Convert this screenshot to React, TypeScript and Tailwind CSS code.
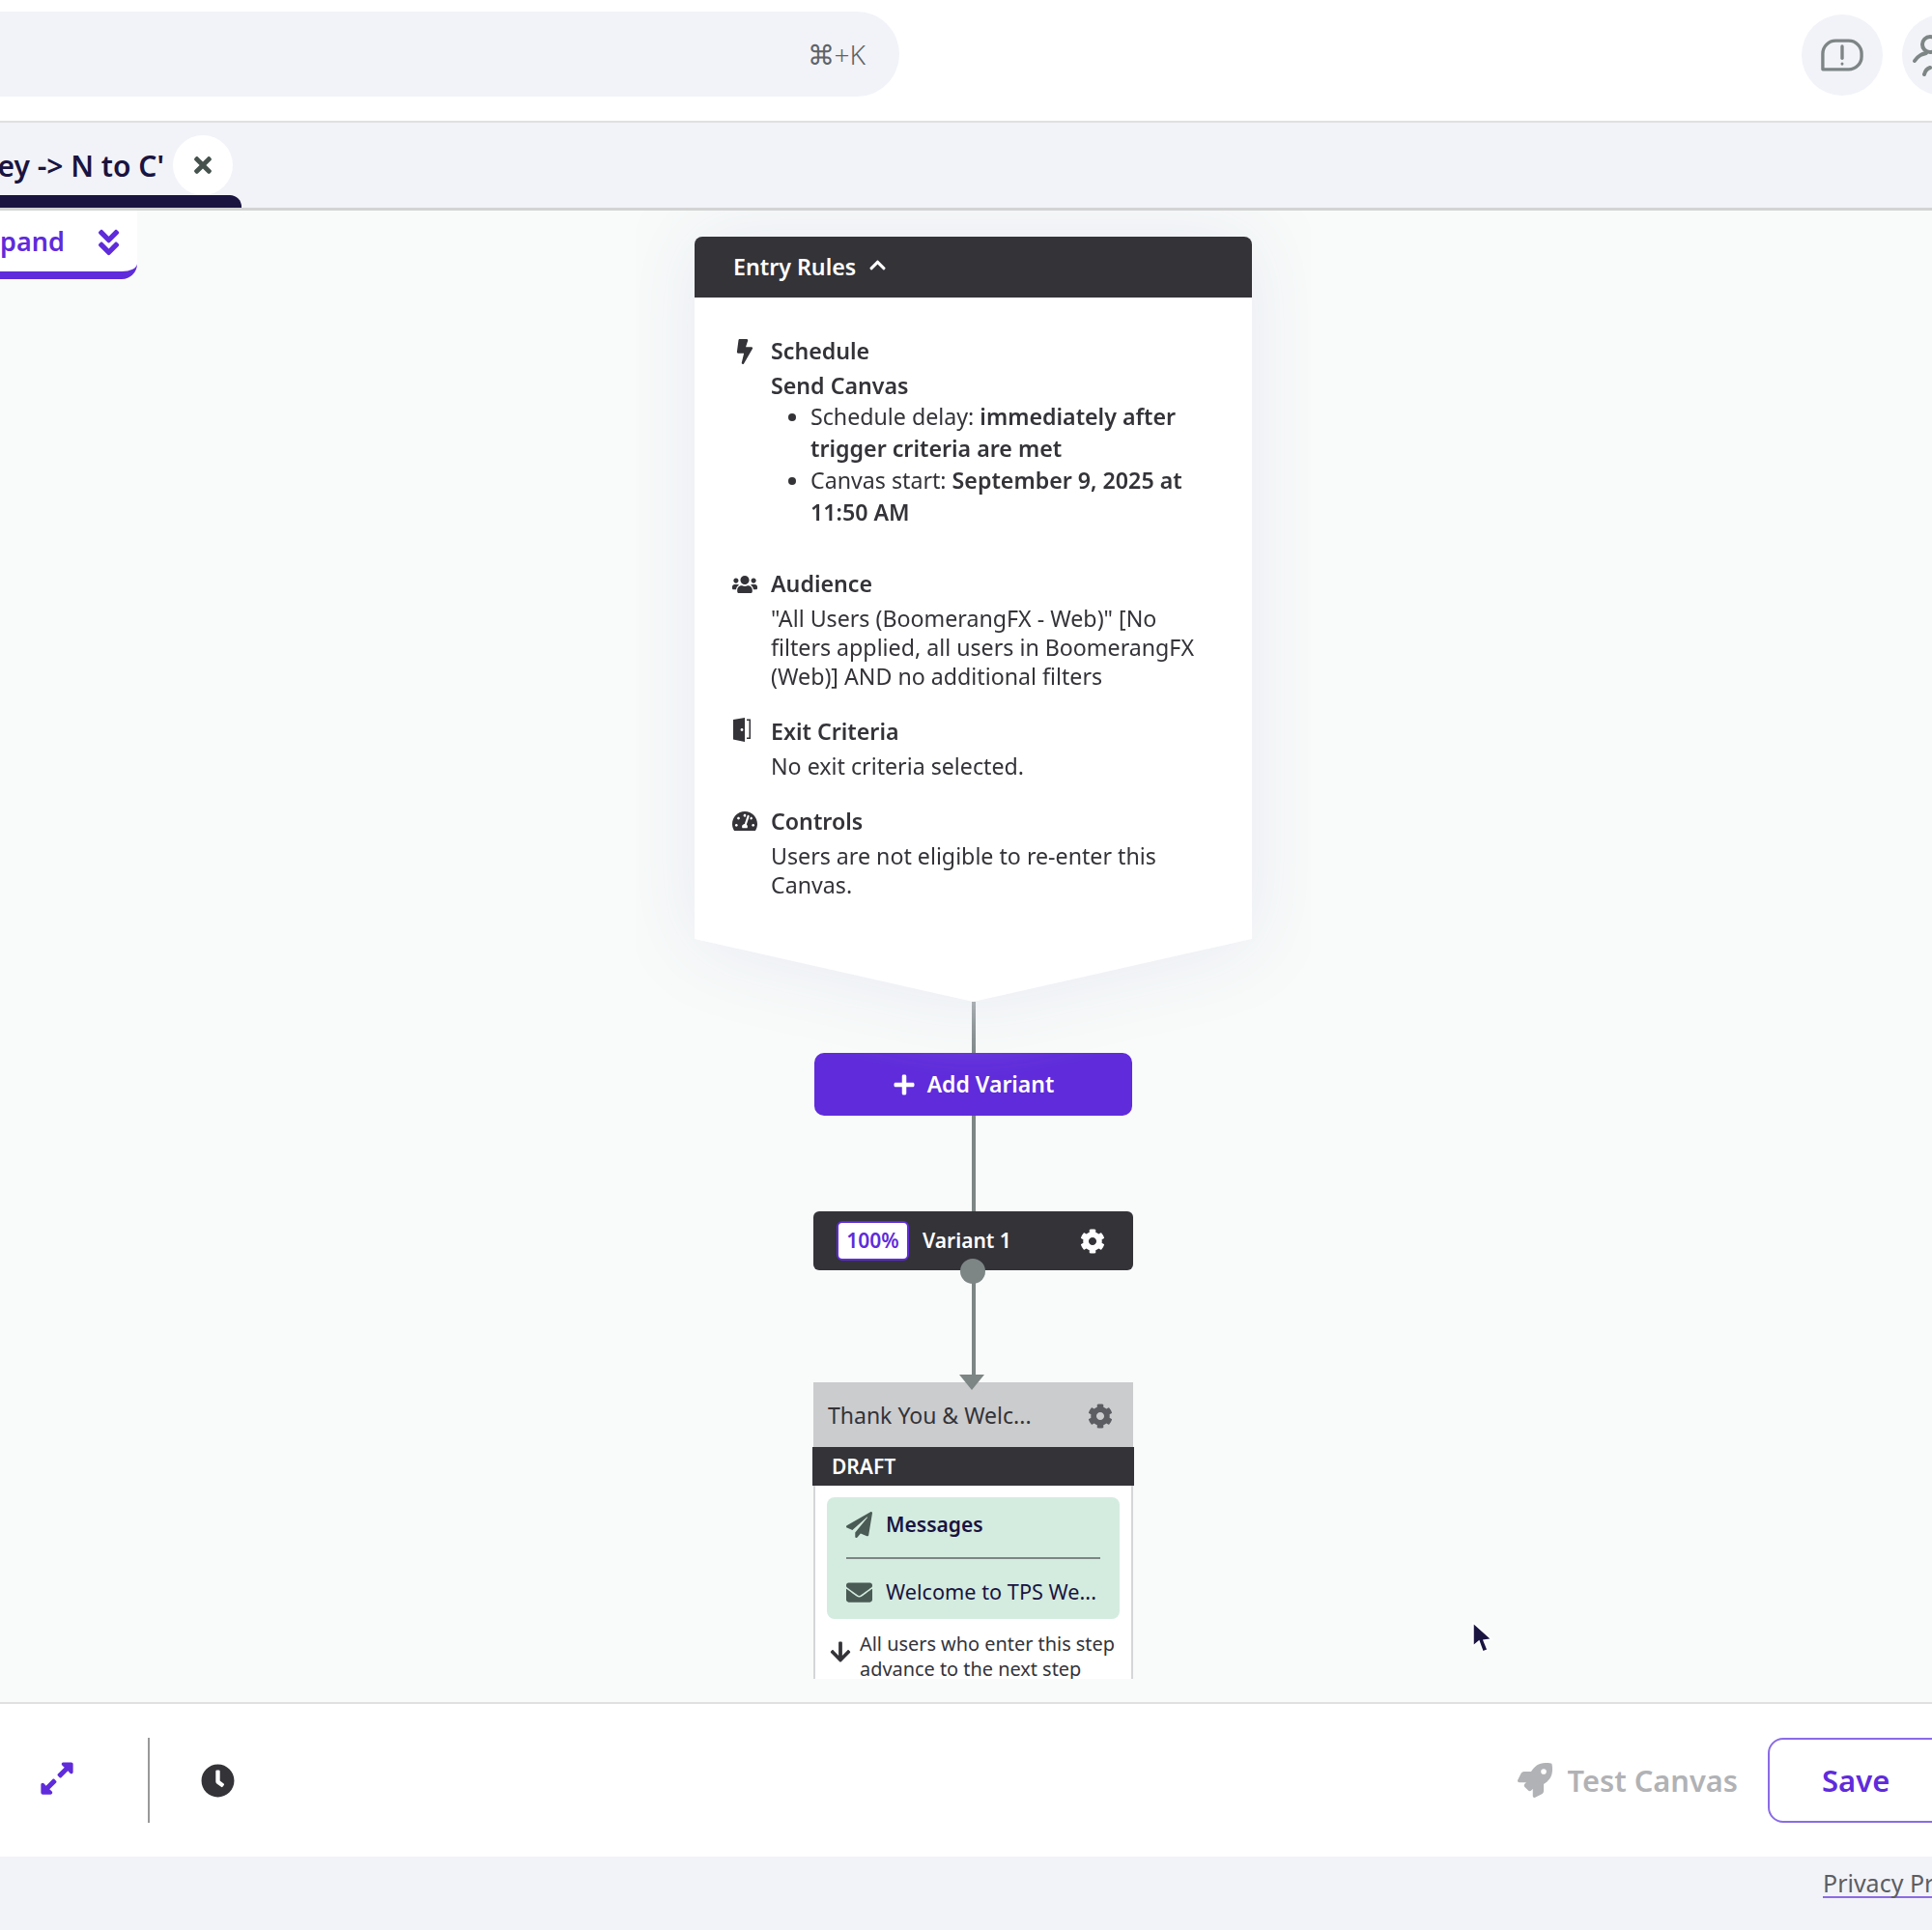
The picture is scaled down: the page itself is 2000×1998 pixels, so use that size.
import React from 'react';
import {
  FaBolt,
  FaUsers,
  FaTachometerAlt,
  FaCog,
  FaPaperPlane,
  FaEnvelope,
  FaRocket,
  FaClock,
  FaExpandAlt,
  FaTimes,
  FaAngleDoubleDown,
  FaChevronUp,
  FaPlus,
  FaArrowDown,
} from 'react-icons/fa';

function Connector({ height }: { height: string }) {
  return <div className={`w-1 shrink-0 bg-[#7d8585] ${height}`} />;
}

function RuleSection({
  icon,
  title,
  children,
  className = '',
}: {
  icon: React.ReactNode;
  title: string;
  children: React.ReactNode;
  className?: string;
}) {
  return (
    <div className={`flex ${className}`}>
      <div className="w-[79px] shrink-0 pl-[39px] pt-[2px] text-[#333338]">{icon}</div>
      <div className="min-w-0 flex-1">
        <div className="text-[23.2px] font-semibold leading-[36px] text-[#333338]">{title}</div>
        {children}
      </div>
    </div>
  );
}

function DoorIcon() {
  return (
    <svg className="mt-[2px]" width="20" height="25" viewBox="0 0 20 25" fill="currentColor">
      <path d="M1 2 L13 0 V25 L1 22.5 Z" />
      <path d="M15 1.5 H19 V22 H15 V20.5 H17.5 V3 H15 Z" />
      <circle cx="10" cy="12.5" r="1.4" fill="#fff" />
    </svg>
  );
}

function EntryRules() {
  return (
    <div className="relative z-10 drop-shadow-[0_0_40px_#e6e8f2]">
      <div className="h-[792px] w-[577px] overflow-hidden rounded-t-lg bg-white [clip-path:polygon(0_0,100%_0,100%_727px,50%_100%,0_727px)]">
        <div className="flex h-[63px] items-center gap-[13px] bg-[#333338] pl-10 text-white">
          <span className="text-[23.2px] font-semibold">Entry Rules</span>
          <FaChevronUp size={19} className="-mt-1" />
        </div>

        <div className="pr-[46px] pt-[37px] text-[23.2px] text-[#333338]">
          <RuleSection icon={<FaBolt size={26} className="mt-1" />} title="Schedule">
            <div className="mt-[3px] font-semibold leading-[31px]">Send Canvas</div>
            <ul className="list-disc pl-[41px] leading-[33px] marker:text-[#333338]">
              <li>
                Schedule delay: <b className="font-semibold">immediately after trigger criteria are met</b>
              </li>
              <li>
                Canvas start: <b className="font-semibold">September 9, 2025 at 11:50 AM</b>
              </li>
            </ul>
          </RuleSection>

          <RuleSection icon={<FaUsers size={26} className="mt-1" />} title="Audience" className="mt-[39px]">
            <p className="mt-[3px] leading-[30px]">
              "All Users (BoomerangFX - Web)" [No filters applied, all users in BoomerangFX (Web)] AND no additional
              filters
            </p>
          </RuleSection>

          <RuleSection icon={<DoorIcon />} title="Exit Criteria" className="mt-[24px]">
            <p className="mt-[3px] leading-[30px]">No exit criteria selected.</p>
          </RuleSection>

          <RuleSection icon={<FaTachometerAlt size={26} className="mt-[3px]" />} title="Controls" className="mt-[24px]">
            <p className="mt-[3px] leading-[30px]">Users are not eligible to re-enter this Canvas.</p>
          </RuleSection>
        </div>
      </div>
    </div>
  );
}

function VariantBar() {
  return (
    <div className="relative flex h-[61px] w-[331px] shrink-0 items-center rounded-md bg-[#333338] pl-6 pr-[29px] text-white">
      <span className="flex h-[41px] w-[75px] items-center justify-center rounded-md border-2 border-[#5f2bdb] bg-white text-[21px] font-semibold text-[#5f2bdb]">
        100%
      </span>
      <span className="ml-[14px] flex-1 text-[21px] font-semibold">Variant 1</span>
      <FaCog size={26} />
      <span className="absolute left-[152px] top-[49px] h-[26px] w-[26px] rounded-full bg-[#7d8585]" />
    </div>
  );
}

function StepCard() {
  return (
    <div className="relative w-[331px] shrink-0">
      <div className="absolute left-[151px] top-[-8px] h-0 w-0 border-x-[13px] border-t-[16px] border-x-transparent border-t-[#7d8585]" />
      <div className="flex h-[67px] items-center justify-between bg-[#cbccce] pl-[15px] pr-[21px] pt-[2px]">
        <span className="text-[23px] text-[#333338]">Thank You &amp; Welc...</span>
        <FaCog size={26} className="text-[#5c5d62]" />
      </div>
      <div className="-mx-px flex h-10 items-center bg-[#333338] pb-0 pl-5 pt-[2px] text-[21px] font-semibold text-white">
        DRAFT
      </div>
      <div className="h-[200px] border-x-2 border-[#d5d6d8] bg-white px-3 pt-3">
        <div className="h-[126px] rounded-lg bg-[#d4ece0] px-5">
          <div className="flex h-[64px] items-center gap-[14px] border-b-2 border-[#7d8585] pb-[5px]">
            <FaPaperPlane size={27} className="text-[#4a5a54]" />
            <span className="text-[21px] font-semibold text-[#1a1440]">Messages</span>
          </div>
          <div className="flex h-[62px] items-center gap-[14px] pt-[7px]">
            <FaEnvelope size={27} className="text-[#4a5a54]" />
            <span className="whitespace-nowrap text-[21.7px] text-[#1a1440]">Welcome to TPS We...</span>
          </div>
        </div>
        <div className="mt-[13px] flex gap-[8px]">
          <FaArrowDown size={24} className="ml-[2px] mt-[9px] shrink-0 text-[#333338]" />
          <p className="whitespace-nowrap text-[19.9px] leading-[26px] text-[#333338]">
            All users who enter this step
            <br />
            advance to the next step
          </p>
        </div>
      </div>
    </div>
  );
}

export default function App() {
  return (
    <div className="flex h-[1998px] w-full flex-col overflow-hidden bg-[#f2f3f8] font-['Noto_Sans',sans-serif]">
      {/* Top bar */}
      <header className="flex h-[127px] shrink-0 items-start border-b-2 border-[#e0e0e0] bg-white">
        <div className="mt-3 flex h-[88px] w-[931px] items-center justify-end rounded-r-full bg-[#f2f3f8] pr-[35px] text-[28px] font-light text-[#5f6368]">
          ⌘+K
        </div>
        <div className="-mr-[53px] ml-auto mt-[15px] flex items-center gap-5">
          <button className="flex h-[84px] w-[84px] items-center justify-center rounded-full bg-[#f2f3f8]">
            <svg width="44" height="35" viewBox="0 0 46 36" fill="none" stroke="#7d8585" strokeWidth="3.5">
              <path d="M2 33 V16 A14 14 0 0 1 16 2 H30 A14 14 0 0 1 44 16 V19 A14 14 0 0 1 30 33 Z" strokeLinejoin="round" />
              <path d="M23 8 V21" strokeLinecap="round" />
              <circle cx="23" cy="27" r="1.6" fill="#7d8585" stroke="none" />
            </svg>
          </button>
          <button className="flex h-[84px] w-[84px] items-center justify-start rounded-full bg-[#f2f3f8] pl-[9px]">
            <svg width="40" height="44" viewBox="0 0 40 44" fill="none" stroke="#7d8585" strokeWidth="4" strokeLinecap="round">
              <circle cx="20" cy="11" r="8" />
              <path d="M4 28 C8 22 12 21 16 20" />
              <path d="M14 42 C15 38 17 36 20 35" />
            </svg>
          </button>
        </div>
      </header>

      {/* Tab strip */}
      <div className="flex h-[91px] shrink-0 items-start border-b-[3px] border-[#d2d3d3] bg-[#f2f3f8]">
        <div className="flex h-[88px] w-[250px] flex-col justify-end">
          <div className="flex h-[62px] items-center justify-end pr-[9px]">
            <span className="mr-[9px] whitespace-nowrap text-[30px] font-semibold text-[#1a1440]">ey -&gt; N to C'</span>
            <button className="flex h-[62px] w-[62px] shrink-0 items-center justify-center rounded-full bg-white text-[#45524d]">
              <FaTimes size={26} />
            </button>
          </div>
          <div className="h-[13px] rounded-tr-xl bg-[#1a1440]" />
        </div>
      </div>

      {/* Canvas */}
      <main className="relative h-[1544px] shrink-0 overflow-hidden bg-[#f9fbfa]">
        <div className="absolute left-0 top-0 flex h-[71px] w-[142px] items-center justify-end gap-[32px] rounded-br-2xl border-b-[8px] border-[#5f2bdb] bg-white pr-[16px] pt-[2px] text-[27px] font-semibold text-[#5f2bdb]">
          <span>pand</span>
          <FaAngleDoubleDown size={34} />
        </div>

        <div className="ml-[658px] flex h-[1520px] w-[699px] flex-col items-center overflow-hidden pt-[27px]">
          <EntryRules />
          <Connector height="h-[53px]" />
          <button className="flex h-[65px] w-[329px] shrink-0 items-center justify-center gap-3 rounded-[10px] bg-[#5f2bdb] text-[23px] font-semibold text-white">
            <FaPlus size={24} />
            Add Variant
          </button>
          <Connector height="h-[99px]" />
          <VariantBar />
          <Connector height="h-[116px]" />
          <StepCard />
        </div>

        {/* Mouse pointer in the recording */}
        <svg className="absolute left-[1523px] top-[1460px]" width="24" height="36" viewBox="0 0 24 36">
          <path d="M2 2 V26 L8 21 L12 32 L17 30 L13 20 L21 19 Z" fill="#1a1440" stroke="#fff" strokeWidth="1.5" />
        </svg>
      </main>

      {/* Footer bar */}
      <footer className="flex h-[160px] shrink-0 items-center border-t-2 border-[#e0e0e0] bg-white">
        <FaExpandAlt size={38} className="-mt-[4px] ml-[40px] text-[#5f2bdb]" />
        <div className="ml-[75px] h-[88px] w-0.5 bg-[#999999]" />
        <FaClock size={35} className="ml-[53px] text-[#333338]" />
        <div className="ml-auto flex items-center gap-[16px] text-[30.8px] font-semibold text-[#b1b2b5]">
          <FaRocket size={36} />
          Test Canvas
        </div>
        <button className="-mr-[100px] ml-[31px] flex h-[88px] w-[270px] shrink-0 items-center rounded-2xl border-2 border-[#8a6be6] bg-white pl-[54px] text-[31px] font-semibold text-[#5f2bdb]">
          Save
        </button>
      </footer>

      <div className="flex flex-1 justify-end overflow-hidden pt-[12px]">
        <a className="-mr-[120px] h-[31px] w-[233px] whitespace-nowrap border-b-2 border-[#8a6be6] text-[25px] leading-[30px] text-[#5c5d62]">
          Privacy Pr
        </a>
      </div>
    </div>
  );
}
